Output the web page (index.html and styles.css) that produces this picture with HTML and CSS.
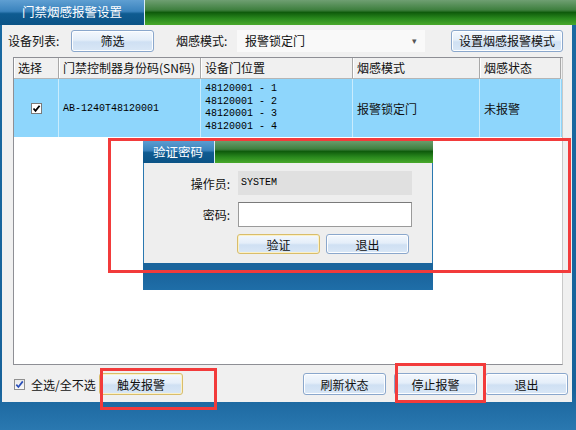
FILE: index.html
```html
<!DOCTYPE html>
<html lang="zh-CN">
<head>
  <meta charset="UTF-8" />
  <title>门禁烟感报警设置</title>
  <link rel="stylesheet" href="styles.css">
</head>
<body>
  <div class="app">
    <!-- Title bar -->
    <div class="titlebar">
      <div class="tab">门禁烟感报警设置</div>
      <div class="titlefill"></div>
    </div>

    <!-- Main panel -->
    <div class="panel">
      <div class="toolbar">
        <span class="lbl lbl-dev">设备列表:</span>
        <button class="btn btn-filter">筛选</button>
        <span class="lbl lbl-mode">烟感模式:</span>
        <div class="combo">
          <span>报警锁定门</span>
          <span class="arrow">&#9662;</span>
        </div>
        <button class="btn btn-set">设置烟感报警模式</button>
      </div>

      <div class="grid">
        <div class="grow head">
          <div class="cell">选择</div>
          <div class="cell">门禁控制器身份码(SN码)</div>
          <div class="cell">设备门位置</div>
          <div class="cell">烟感模式</div>
          <div class="cell">烟感状态</div>
        </div>
        <div class="grow data">
          <div class="cell center">
            <span class="chk">
              <svg width="9" height="9" viewBox="0 0 9 9"><path d="M1.5 4.5 L3.5 6.8 L7.6 1.8" fill="none" stroke="#000" stroke-width="1.8"/></svg>
            </span>
          </div>
          <div class="cell mono">AB-1240T48120001</div>
          <div class="cell mono doors">
            <div>48120001 - 1</div>
            <div>48120001 - 2</div>
            <div>48120001 - 3</div>
            <div>48120001 - 4</div>
          </div>
          <div class="cell">报警锁定门</div>
          <div class="cell">未报警</div>
        </div>
      </div>

      <div class="bottombar">
        <span class="chk chk-blue">
          <svg width="9" height="9" viewBox="0 0 9 9"><path d="M1.3 4.6 L3.4 7 L7.8 1.4" fill="none" stroke="#2a4fb8" stroke-width="1.7"/></svg>
        </span>
        <span class="lbl-all">全选/全不选</span>
        <button class="btn btn-focus">触发报警</button>
        <div class="spacer"></div>
        <button class="btn">刷新状态</button>
        <button class="btn">停止报警</button>
        <button class="btn">退出</button>
      </div>

      <!-- Password dialog -->
      <div class="dialog">
        <div class="dtitle">
          <div class="dtab">验证密码</div>
          <div class="titlefill"></div>
        </div>
        <div class="dbody">
          <div class="drow">
            <span class="dlbl">操作员:</span>
            <div class="field mono">SYSTEM</div>
          </div>
          <div class="drow">
            <span class="dlbl">密码:</span>
            <div class="input"></div>
          </div>
          <div class="dbtns">
            <button class="btn btn-focus">验证</button>
            <button class="btn">退出</button>
          </div>
        </div>
        <div class="dfoot"></div>
      </div>
    </div>

    <!-- annotation frames -->
    <div class="mark mark-dialog"></div>
    <div class="mark mark-trigger"></div>
    <div class="mark mark-stop"></div>
  </div>
</body>
</html>
```

FILE: styles.css
```css
body {
  margin: 0;
  width: 576px;
  height: 430px;
  overflow: hidden;
  background: #17649a;
  font-family: "Noto Sans CJK SC", "Liberation Sans", sans-serif;
  font-size: 12px;
  color: #111;
}
.app {
  position: relative;
  height: 430px;
  display: flex;
  flex-direction: column;
  background: linear-gradient(#1a6aa2, #17629a 90%, #2a78b0);
}

/* --- title bars --- */
.titlebar {
  height: 25px;
  display: flex;
}
.tab {
  width: 145px;
  box-sizing: border-box;
  padding-left: 22px;
  line-height: 24px;
  font-size: 12.5px;
  color: #fff;
  background: linear-gradient(#5f9fd2, #3a83bd 45%, #0f5b91 55%, #0b5386);
  border-right: 1px solid #d8ecf8;
}
.titlefill {
  flex: 1;
  background: linear-gradient(#6f9f72, #3e7f3e 40%, #0f5c0c 50%, #2a8a1e 75%, #48a82a);
}

/* --- panel --- */
.panel {
  position: relative;
  height: 377px;
  margin: 0 4px 0 2px;
  background: #f0f0f0;
  display: flex;
  flex-direction: column;
}
.toolbar {
  display: flex;
  align-items: center;
  height: 23px;
  margin-top: 4px;
  padding-left: 6px;
}
.lbl-dev { width: 63px; }
.lbl-mode { width: 61px; margin-left: 22px; }

.btn {
  height: 22px;
  width: 83px;
  flex-shrink: 0;
  padding: 0;
  border: 1px solid #8aa7cc;
  border-radius: 3px;
  background: linear-gradient(#f4f8fd, #e4eef9 45%, #cfe0f3 55%, #d9e7f6);
  font-family: inherit;
  font-size: 12px;
  color: #111;
  box-shadow: inset 0 0 0 1px #fdfeff;
}
.btn-filter { width: 83px; }
.btn-set { width: 112px; margin-left: 26px; }
.btn-focus {
  border-color: #d9bd6a;
  box-shadow: inset 0 0 0 1px #fbf1c8;
}

.combo {
  width: 188px;
  height: 22px;
  box-sizing: border-box;
  padding: 0 8px;
  display: flex;
  align-items: center;
  justify-content: space-between;
  background: #f9f9f9;
}
.arrow { font-size: 9px; color: #555; }

/* --- grid --- */
.grid {
  margin: 5px 0 0 11px;
  width: 550px;
  height: 308px;
  box-sizing: border-box;
  border: 1px solid #8e8f95;
  border-right-color: #c9c9c9;
  background: #fff;
}
.grow {
  display: grid;
  grid-template-columns: 45px 142px 152px 127px 81px;
}
.head {
  height: 21px;
  background: #f0f0f0;
}
.head .cell {
  line-height: 20px;
  border-right: 1px solid #a8a8a8;
  border-bottom: 1px solid #b5b5b5;
  box-shadow: inset 1px 0 0 #fff;
}
.cell {
  padding-left: 4px;
  overflow: hidden;
  white-space: nowrap;
}
.data {
  height: 58px;
  background: #8ed6fc;
}
.data .cell {
  display: flex;
  align-items: center;
  border-right: 1px solid #c9ecfd;
}
.data .center { justify-content: center; padding-left: 0; }
.mono {
  font-family: "Liberation Mono", "DejaVu Sans Mono", monospace;
  font-size: 10px;
  color: #000;
}
.data .doors {
  flex-direction: column;
  align-items: flex-start;
  justify-content: center;
  line-height: 12.5px;
  white-space: pre;
}

.chk {
  width: 11px;
  height: 11px;
  flex-shrink: 0;
  box-sizing: border-box;
  border: 1px solid #7a7a7a;
  background: #fff;
  display: inline-flex;
  align-items: center;
  justify-content: center;
}
.chk-blue {
  border-color: #8f8f8f;
  background: linear-gradient(#e8e8e8, #fafafa);
}

/* --- bottom bar --- */
.bottombar {
  display: flex;
  align-items: center;
  height: 22px;
  margin-top: 8px;
  padding: 0 4px 0 12px;
}
.lbl-all {
  margin-left: 6px;
  width: 63px;
  flex-shrink: 0;
  white-space: nowrap;
}
.bottombar .btn-focus { margin-left: 5px; width: 84px; }
.spacer { flex: 1; }
.bottombar .btn + .btn { margin-left: 8px; }

/* --- dialog --- */
.dialog {
  position: absolute;
  left: 141px;
  top: 115px;
  width: 290px;
  height: 150px;
  display: flex;
  flex-direction: column;
  background: #2a78b0;
}
.dtitle {
  height: 23px;
  display: flex;
}
.dtab {
  width: 72px;
  box-sizing: border-box;
  padding-left: 10px;
  line-height: 23px;
  font-size: 12.5px;
  color: #fff;
  background: linear-gradient(#5f9fd2, #3a83bd 45%, #0f5b91 55%, #0b5386);
  border-right: 1px solid #d8ecf8;
}
.dbody {
  height: 100px;
  margin: 0 1px;
  box-sizing: border-box;
  padding-top: 8px;
  background: #eeeeee;
}
.drow {
  display: flex;
  align-items: center;
  margin-bottom: 7px;
}
.dlbl {
  width: 86px;
  text-align: right;
  margin-right: 8px;
}
.field {
  width: 174px;
  height: 24px;
  line-height: 24px;
  box-sizing: border-box;
  padding-left: 3px;
  background: #e0e0e0;
}
.input {
  width: 174px;
  height: 25px;
  box-sizing: border-box;
  background: #fff;
  border: 1px solid #9a9a9a;
  border-top-color: #7a7a7a;
}
.dbtns {
  display: flex;
  padding-left: 93px;
}
.dbtns .btn { height: 20px; }
.dbtns .btn + .btn { margin-left: 6px; }
.dfoot {
  flex: 1;
  background: linear-gradient(#1a649c, #1a649c 35%, #1f6ea8);
}

/* --- red annotation frames --- */
.mark {
  position: absolute;
  box-sizing: border-box;
  border: 3px solid #f23b3b;
}
.mark-dialog { left: 108px; top: 138px; width: 463px; height: 135px; }
.mark-trigger { left: 100px; top: 368px; width: 117px; height: 42px; }
.mark-stop { left: 395px; top: 363px; width: 91px; height: 40px; }
```
